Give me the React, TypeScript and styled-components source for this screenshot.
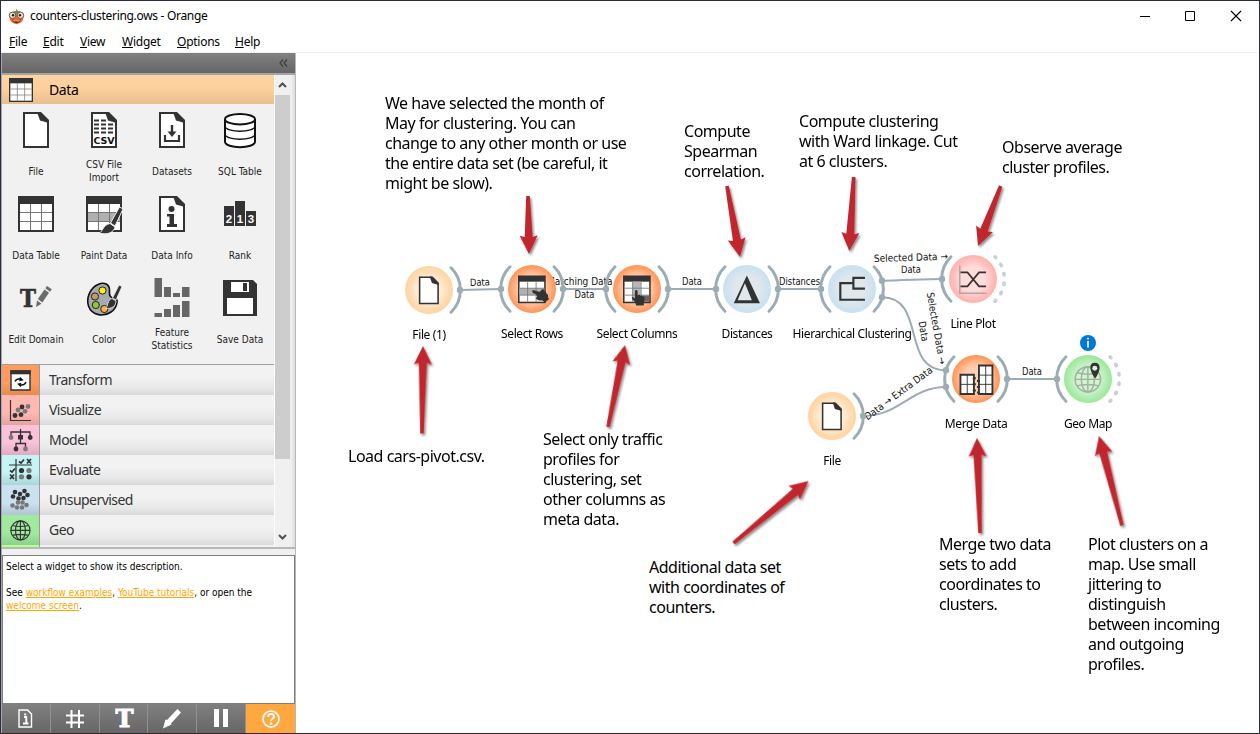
import React from "react";
import styled, { createGlobalStyle } from "styled-components";

const UI = `"Noto Sans", "Open Sans", sans-serif`;
const SMALL = `"DejaVu Sans Condensed", "DejaVu Sans", sans-serif`;
const INK = "#333333";
const LINK = "#9cacb4";

const GlobalStyle = createGlobalStyle`
  * { box-sizing: border-box; }
  body { margin: 0; background: #fff; font-family: ${UI}; color: #000; }
  svg { display: block; flex: none; }
`;

const Window = styled.div`
  width: 1260px;
  height: 734px;
  display: flex;
  flex-direction: column;
  border: 1px solid #2b2e42;
  border-bottom-color: #32242c;
  background: #fff;
  overflow: hidden;
`;

const TitleBar = styled.header`
  height: 30px;
  flex: none;
  display: flex;
  align-items: center;
  padding-left: 7px;
`;

const Title = styled.span`
  margin-left: 5px;
  font-size: 12px;
  line-height: 16px;
  letter-spacing: -0.31px;
  flex: 1;
`;

const Controls = styled.div`
  display: flex;
  gap: 30px;
  padding-right: 17px;
`;

const MenuBar = styled.nav`
  height: 22px;
  flex: none;
  display: flex;
  align-items: center;
  gap: 16px;
  padding-left: 8px;
  border-bottom: 1px solid #f0f0f0;
  font-size: 12px;
`;

const MenuItem = styled.span<{ $w: number }>`
  width: ${(p) => p.$w}px;
  letter-spacing: -0.25px;
  white-space: nowrap;
  &::first-letter { text-decoration: underline; }
`;

const Body = styled.div`
  flex: 1;
  display: flex;
  min-height: 0;
`;

const Sidebar = styled.aside`
  width: 295px;
  flex: none;
  display: flex;
  flex-direction: column;
  border-left: 1px solid #a6a8a8;
  border-right: 1px solid #b4b8b8;
  background: #f0f0f0;
`;

const DockHeader = styled.div`
  height: 20px;
  flex: none;
  display: flex;
  align-items: center;
  justify-content: flex-end;
  padding-right: 7px;
  background: linear-gradient(#808080, #666);
`;

const ToolArea = styled.div`
  height: 476px;
  flex: none;
  display: flex;
  border-top: 2px solid #a4a4a4;
  border-bottom: 2px solid #b4b8b8;
`;

const ToolList = styled.div`
  width: 272px;
  display: flex;
  flex-direction: column;
  overflow: hidden;
  background: #f1f1f1;
`;

const DataTab = styled.div`
  height: 29px;
  flex: none;
  display: flex;
  align-items: center;
  padding-left: 7px;
  gap: 16px;
  font-size: 14px;
  letter-spacing: -0.4px;
  background: linear-gradient(#ffd39f 0%, #fccf9b 50%, #e8bf8f 100%);
`;

const WidgetGrid = styled.div`
  height: 261px;
  flex: none;
  display: grid;
  grid-template-columns: repeat(4, 68px);
  grid-auto-rows: 84px;
  border-bottom: 1px solid #a0a0a0;
`;

const WidgetCell = styled.div`
  display: flex;
  flex-direction: column;
  align-items: center;
  padding-top: 8px;
`;

const WidgetLabel = styled.div`
  height: 26px;
  margin-top: 10px;
  display: flex;
  align-items: center;
  text-align: center;
  white-space: pre;
  font: 10px/13px ${SMALL};
  color: #222;
`;

const CategoryRow = styled.div`
  height: 30px;
  flex: none;
  display: flex;
`;

const CategoryIcon = styled.div<{ $top: string; $bottom: string }>`
  width: 38px;
  border-right: 1px solid #9a9a9a;
  display: flex;
  align-items: center;
  justify-content: center;
  background: linear-gradient(${(p) => p.$top} 60%, ${(p) => p.$bottom});
`;

const CategoryName = styled.div`
  flex: 1;
  padding-left: 9px;
  font-size: 14px;
  line-height: 30px;
  letter-spacing: -0.55px;
  color: ${INK};
  background: linear-gradient(#f2f2f2 40%, #e9e9e9 75%, #d9d9d9);
`;

const ScrollBar = styled.div`
  width: 17px;
  display: flex;
  flex-direction: column;
  align-items: center;
  justify-content: space-between;
  padding: 7px 1px 7px 0;
  border-left: 1px solid #fff;
  background: #f0f0f0;
`;

const Thumb = styled.div`
  width: 15px;
  height: 364px;
  margin: 7px 0 auto;
  background: #cdcdcd;
`;

const DockEdge = styled.div`
  flex: 1;
  background: linear-gradient(90deg, #f0f0f0, #dcdcdc);
`;

const Splitter = styled.div`
  height: 6px;
  flex: none;
  background: #f0f0f0;
`;

const Description = styled.div`
  flex: 1;
  border: 1px solid #7c7f80;
  background: #fff;
  padding: 4px 3px;
  font: 10px/13px ${SMALL};
  color: #000;
`;

const Para = styled.p`
  margin: 0 0 13px;
`;

const HelpLink = styled.a`
  color: #ffa500;
  text-decoration: underline;
`;

const BottomBar = styled.div`
  height: 29px;
  flex: none;
  display: grid;
  grid-template-columns: repeat(6, 1fr);
`;

const BarButton = styled.div<{ $active?: boolean }>`
  display: flex;
  align-items: center;
  justify-content: center;
  border-right: ${(p) => (p.$active ? "none" : "1px solid #919191")};
  background: ${(p) => (p.$active ? "#ffa840" : "linear-gradient(#808080, #666)")};
`;

const Canvas = styled.main`
  position: relative;
  flex: 1;
  background: #fff;
`;

const Note = styled.div<{ $x: number; $y: number }>`
  position: absolute;
  left: ${(p) => p.$x - 296}px;
  top: ${(p) => p.$y - 53}px;
  font-size: 16px;
  line-height: 20px;
  letter-spacing: -0.48px;
  white-space: pre;
`;

const NodeName = styled.div<{ $x: number; $y: number }>`
  position: absolute;
  left: ${(p) => p.$x - 396}px;
  top: ${(p) => p.$y - 61}px;
  width: 200px;
  text-align: center;
  font-size: 12px;
  line-height: 16px;
  letter-spacing: -0.38px;
`;

/* ---------- icons, all drawn on a 36 unit grid ---------- */

const Page = () => (
  <>
    <path d="M6 1H21L30 10V35H6Z" fill="#fff" stroke={INK} strokeWidth="2" />
    <path d="M19 0H23L31 8V11L22 8.5Z" fill={INK} />
  </>
);

const Table = ({ shade }: { shade?: "row" | "col" }) => (
  <>
    <rect x="0" y="0" width="36" height="36" fill={INK} />
    <path d="M2 8H34V34H2Z" fill="#fff" />
    {shade === "row" && <rect x="2" y="16.5" width="32" height="9" fill="#b0b0b0" />}
    {shade === "col" && <rect x="12.5" y="8" width="10.5" height="26" fill="#b8b8b8" />}
    <path d="M12.5 8V34M23.5 8V34M2 16.5H34M2 25.5H34" stroke="#777" strokeWidth="1.1" fill="none" />
  </>
);

const Brush = () => (
  <g stroke="#f1f1f1" strokeWidth="1" fill={INK}>
    <path d="M33.5 11L37 13L29 30L24.5 27Z" />
    <path d="M24 27.5L29 31C28 36 22 39.5 13 37C17 36 16.5 29 24 27.5Z" />
  </g>
);

/* pointing to the left, fist at the right */
const Hand = () => (
  <path
    d="M.8 3.200C0 1.500 1 .3 2.800 .5L10 3L13.500 -.5C15-1 16 0 16.500 1.500L18.300 2.500L19 5L21 6.500V10L22.500 12L17 16.500L13.500 14C10 14.500 6.500 13.500 5.500 11.500C5 10.500 6 9.800 7 9.500L5.500 6L1.800 4.500Z"
    fill={INK}
  />
);

const Globe = ({ color, width = 2 }: { color: string; width?: number }) => (
  <g fill="none" stroke={color} strokeWidth={width}>
    <circle cx="18" cy="18" r="16.5" />
    <ellipse cx="18" cy="18" rx="8.5" ry="16.5" />
    <path d="M18 1.5V34.5M1.5 18H34.5M4 9.5Q18 13 32 9.5M4 26.5Q18 23 32 26.5" />
  </g>
);

const glyphs: Record<string, React.ReactNode> = {
  file: <Page />,
  csv: (
    <>
      <Page />
      <path d="M8 8.5h5m2 0h5M8 12.5h5m2 0h5m2 0h5M8 16.5h5m2 0h5m2 0h5M8 20.5h5m2 0h5m2 0h5" stroke={INK} strokeWidth="1.8" />
      <text x="18" y="32" textAnchor="middle" fontFamily="DejaVu Sans" fontWeight="700" fontSize="9.5" textLength="21" fill="#111">CSV</text>
    </>
  ),
  datasets: (
    <>
      <Page />
      <path d="M18 13V22" stroke={INK} strokeWidth="2.4" />
      <path d="M13.5 19.5H22.5L18 25Z" fill={INK} />
      <path d="M11 23V29H25V23" fill="none" stroke={INK} strokeWidth="2.2" />
    </>
  ),
  sql: (
    <g fill="#fff" stroke="#111" strokeWidth="2">
      <path d="M3 7V29.5C3 37 33 37 33 29.5V7" />
      <ellipse cx="18" cy="7.2" rx="15" ry="5.2" />
      <path d="M3 14C3 21 33 21 33 14M3 22C3 29 33 29 33 22" fill="none" strokeWidth="1.3" />
    </g>
  ),
  table: <Table />,
  paint: (
    <>
      <Table shade="row" />
      <Brush />
    </>
  ),
  info: (
    <>
      <Page />
      <circle cx="17.5" cy="13" r="3" fill={INK} />
      <path d="M13 18H20V28H23V31H13V28H15.5V20.5H13Z" fill={INK} />
    </>
  ),
  rank: (
    <>
      <path d="M2 10H12V30H2ZM13 5H23V30H13ZM24 15H34V30H24Z" fill={INK} />
      <g fill="#fff" fontFamily="Liberation Sans" fontWeight="700" fontSize="11.5" textAnchor="middle">
        <text x="7" y="27">2</text>
        <text x="18" y="27">1</text>
        <text x="29" y="27">3</text>
      </g>
    </>
  ),
  domain: (
    <>
      <text x="10" y="27" textAnchor="middle" fontFamily="DejaVu Serif" fontWeight="700" fontSize="24" textLength="16" lengthAdjust="spacingAndGlyphs" fill={INK} stroke={INK} strokeWidth=".6">T</text>
      <path d="M18 27L19 20.5L23.5 23.8Z M19.8 19L26.5 9.5L31 12.8L24.3 22.4Z M27.3 8.3L29 6L33.8 9.2L32 11.7Z" fill="#6b6b6b" />
    </>
  ),
  color: (
    <>
      <path d="M12 4.5C18 1.5 24 4 23.5 11C23 17 25 18 29 18C33 19 31 28 25 32C18 37 6 36 2.5 26C0 18 4 8 12 4.5Z" fill="#a8aaad" stroke="#111" strokeWidth="1.6" />
      <g stroke="#222" strokeWidth="1">
        <circle cx="16.5" cy="10.5" r="3.6" fill="#ffef00" />
        <circle cx="9" cy="16.5" r="3.6" fill="#c49a6c" />
        <circle cx="9.8" cy="25" r="3.6" fill="#8cc63f" />
        <circle cx="18.3" cy="29" r="3.6" fill="#fbb03b" />
      </g>
      <g stroke="#f1f1f1" strokeWidth=".8" fill={INK}>
        <path d="M33 5L36 6.500L30 20L26.500 18Z" />
        <path d="M26 18.500L30 21C30 26 26 29 19.500 28.500C22.500 26 21 20 26 18.500Z" />
      </g>
    </>
  ),
  stats: (
    <path d="M.5-2H8V17H.5ZM10 7H17V17H10ZM19 13H26V17H19ZM28 7H35.5V17H28ZM.5 33H8V37H.5ZM10 29H17V37H10ZM19 25H26V37H19ZM28 21H35.5V37H28Z" fill="#666" />
  ),
  save: (
    <>
      <path d="M1 0H31L35 4V36H1Z" fill={INK} />
      <path d="M9 2H27V12H9Z M5 18H31V34H5Z" fill="#fff" />
      <path d="M21 3H25V11H21Z" fill={INK} />
    </>
  ),
  rows: (
    <>
      <Table shade="row" />
      <g transform="translate(18 18.500)"><Hand /></g>
    </>
  ),
  cols: (
    <>
      <Table shade="col" />
      <rect x="24" y="26" width="10" height="8" fill="#666" />
      <path d="M15.5 21C15.5 18 19 18 19 21V26C21 24.5 22 25 22.5 26.5C24 25.5 25 26 25.5 27.5C27.5 27 28.5 28.5 28 31L27 36V39H17L16 35L11.5 30C11 27.5 13 27.5 15.5 30Z" fill={INK} />
    </>
  ),
  delta: <path fillRule="evenodd" d="M18 0L35 36H1ZM15.5 10L6 32H24.5Z" fill={INK} />,
  tree: <path d="M35 3H20V17H35M20 10H3V31.5H35" fill="none" stroke={INK} strokeWidth="2.8" />,
  lines: (
    <>
      <path d="M1 0V36H36" fill="none" stroke="#b5a5a5" strokeWidth="2" />
      <path d="M2 9H11L26 27H35M2 27H11L26 9H35" fill="none" stroke={INK} strokeWidth="2.2" />
    </>
  ),
  merge: (
    <>
      <path d="M-2 12H15.500V37H-2ZM22 0H39.500V37H22Z" fill="#fff" stroke={INK} strokeWidth="2.4" />
      <path d="M6.800 12V37M-2 24.500H15.500M30.800 0V37M22 12.500H39.500M22 24.500H39.500" fill="none" stroke={INK} strokeWidth="1.200" />
      <path d="M14 16.500H18M14 24.500H18M14 32.500H18M19.500 20H23M19.500 28H23M19.500 35H23" stroke={INK} strokeWidth="2.600" />
    </>
  ),
  map: (
    <>
      <Globe color="#9fb39f" width={1.9} />
      <path d="M27-3.5C36-3.5 34.5 7 27.5 17C20 7 18.5-3.5 27-3.5Z" fill={INK} />
      <circle cx="27" cy="3.5" r="3.2" fill="#d9f3d9" />
    </>
  ),
};

const Glyph = ({ name, size = 36 }: { name: string; size?: number }) => (
  <svg width={size} height={size} viewBox="0 0 36 36" overflow="visible">{glyphs[name]}</svg>
);

const widgets: [string, string][] = [
  ["file", "File"],
  ["csv", "CSV File\nImport"],
  ["datasets", "Datasets"],
  ["sql", "SQL Table"],
  ["table", "Data Table"],
  ["paint", "Paint Data"],
  ["info", "Data Info"],
  ["rank", "Rank"],
  ["domain", "Edit Domain"],
  ["color", "Color"],
  ["stats", "Feature\nStatistics"],
  ["save", "Save Data"],
];

const Dots = ({ at, fill, r = 2.4 }: { at: number[][]; fill: string; r?: number }) => (
  <>{at.map(([x, y]) => <circle key={`${x}-${y}`} cx={x} cy={y} r={r} fill={fill} />)}</>
);

const categories: { name: string; top: string; bottom: string; icon?: React.ReactNode }[] = [
  {
    name: "Transform", top: "#ff9b5c", bottom: "#e68a50",
    icon: (
      <>
        <path d="M3 3H22V22H3Z" fill="#fff" stroke={INK} strokeWidth="1.4" />
        <path d="M2.3 2.3H22.7V6.3H2.3Z" fill={INK} />
        <path d="M7 13.500Q8.500 10 13 11.200M18 14Q16.500 17.800 12 16.800" fill="none" stroke="#111" strokeWidth="1.500" />
        <path d="M11.800 8.800L15.800 12.200L11.300 13.200ZM13.300 14.800L9.200 15.800L12.800 19.200Z" fill="#111" />
      </>
    ),
  },
  {
    name: "Visualize", top: "#ffb7b1", bottom: "#e6a29c",
    icon: (
      <>
        <path d="M2.500 2V22.500H23" fill="none" stroke={INK} strokeWidth="1.2" />
        <Dots at={[[14, 9], [7, 17.500], [13, 16.700]]} fill={INK} />
        <Dots at={[[20, 8.500], [10, 12], [17, 13.300]]} fill="#7a7a7a" />
      </>
    ),
  },
  {
    name: "Model", top: "#fac1d9", bottom: "#e0abc2",
    icon: (
      <>
        <path d="M3 8V4H22V8M12.500 1V9M8 19V15.500H17.500V19M12.500 11V15.500" fill="none" stroke={INK} strokeWidth="1.3" />
        <path d="M10 7H15V11.500H10Z" fill={INK} />
        <Dots at={[[22.200, 9.500], [8, 21]]} fill={INK} />
        <Dots at={[[3, 9.500], [17.500, 21]]} fill="#7a7a7a" />
      </>
    ),
  },
  {
    name: "Evaluate", top: "#c3f3f3", bottom: "#a9d6d6",
    icon: (
      <>
        <path d="M8 1V23M1 7H24" stroke={INK} strokeWidth="1.2" />
        <path d="M11 3.500L13 5L16 1.500M19 1L23 5.500M23 1L19 5.500M2 12.500L4 14L7 10.500M2 16.500L6 21M6 16.500L2 21" fill="none" stroke={INK} strokeWidth="1.7" />
        <Dots at={[[13.500, 12.500], [21, 18.800]]} fill={INK} r={2.6} />
        <Dots at={[[21, 12.500], [13.500, 18.800]]} fill="#7a7a7a" r={2.6} />
      </>
    ),
  },
  {
    name: "Unsupervised", top: "#cae1ef", bottom: "#b0c5d2",
    icon: (
      <>
        <Dots at={[[7, 4], [12, 6], [16.500, 3], [5, 8.500], [10.500, 10.500], [15.500, 10], [19.500, 7]]} fill={INK} r={2.3} />
        <Dots at={[[10, 14.500], [14.500, 14.500], [4.500, 17.500], [9, 19.500], [14, 19.500], [18.500, 17]]} fill="#777" r={2.3} />
      </>
    ),
  },
  {
    name: "Geo", top: "#9fea9f", bottom: "#8bd08b",
    icon: <g transform="translate(2 2) scale(.58)"><Globe color={INK} /></g>,
  },
];

const nodeList: { x: number; y: number; glyph: string; label: string; tone: string; left?: boolean; right?: "line" | "dots" }[] = [
  { x: 429, y: 290, glyph: "file", label: "File (1)", tone: "sand", right: "line" },
  { x: 532, y: 289, glyph: "rows", label: "Select Rows", tone: "orange", left: true, right: "line" },
  { x: 637, y: 289, glyph: "cols", label: "Select Columns", tone: "orange", left: true, right: "line" },
  { x: 747, y: 289, glyph: "delta", label: "Distances", tone: "blue", left: true, right: "line" },
  { x: 852, y: 289, glyph: "tree", label: "Hierarchical Clustering", tone: "blue", left: true, right: "line" },
  { x: 973, y: 279, glyph: "lines", label: "Line Plot", tone: "pink", left: true, right: "dots" },
  { x: 976, y: 379, glyph: "merge", label: "Merge Data", tone: "orange", left: true, right: "line" },
  { x: 1088, y: 379, glyph: "map", label: "Geo Map", tone: "green", left: true, right: "dots" },
  { x: 832, y: 416, glyph: "file", label: "File", tone: "sand", right: "line" },
];

const tones: Record<string, [string, string]> = {
  sand: ["#ffebd3", "#ffd39f"],
  orange: ["#ffd0b0", "#ff9457"],
  blue: ["#e0e8ee", "#c8e0ef"],
  pink: ["#ffdcda", "#ffb0ac"],
  green: ["#d2f2d0", "#98e898"],
};

const arrows = [
  [528, 196, 529, 254],
  [727, 186, 740, 257],
  [853.7, 177, 849.3, 251],
  [1000.7, 186, 978, 246],
  [422, 433.5, 423, 346],
  [608, 427, 625, 345],
  [733.5, 543, 808.5, 481],
  [980, 533, 977, 438],
  [1122, 525.5, 1099, 436],
];

const Arrow = ({ from }: { from: number[] }) => {
  const [x1, y1, x2, y2] = from;
  const l = Math.hypot(x2 - x1, y2 - y1);
  const angle = (Math.atan2(y2 - y1, x2 - x1) * 180) / Math.PI;
  return (
    <g transform={`translate(${x1} ${y1}) rotate(${angle})`}>
      <path d={`M0-1.8L${l - 17}-4L${l - 18.5}-9L${l} 0L${l - 18.5} 9L${l - 17} 4L0 1.8Z`} fill="#c1272d" />
    </g>
  );
};

const linkTexts: { x: number; y: number; a: number; w: number; t: string }[] = [
  { x: 470, y: 286, a: -1.5, w: 20, t: "Data" },
  { x: 547, y: 285, a: 0, w: 76, t: "Matching Data →" },
  { x: 574.500, y: 298, a: 0, w: 20, t: "Data" },
  { x: 682, y: 285, a: 0, w: 20, t: "Data" },
  { x: 779, y: 285, a: 0, w: 41, t: "Distances" },
  { x: 874, y: 262, a: -1.700, w: 74, t: "Selected Data →" },
  { x: 901, y: 273, a: -1, w: 20, t: "Data" },
  { x: 926.700, y: 293, a: 80, w: 73, t: "Selected Data →" },
  { x: 918.500, y: 322, a: 80, w: 20, t: "Data" },
  { x: 867.500, y: 420.500, a: -36.600, w: 82, t: "Data → Extra Data" },
  { x: 1022, y: 375, a: 0, w: 20, t: "Data" },
];

const links = [
  "M460 290L501 289",
  "M563 289H606",
  "M668 289H716",
  "M778 289H821",
  "M882 280.700C900 280.700 924 279 942 279",
  "M882 297.300C927 297.300 900 370.300 946 370.300",
  "M863 416C900 416 910 387 946 387",
  "M1007 379H1057",
];

const anchors = [
  [460, 290], [501, 289], [563, 289], [606, 289], [668, 289], [716, 289], [778, 289], [821, 289],
  [882, 280.7], [882, 297.3], [942, 279], [946, 370.3], [946, 387], [863, 416], [1007, 379], [1057, 379],
];

const notes: [number, number, string][] = [
  [385, 93, "We have selected the month of\nMay for clustering. You can\nchange to any other month or use\nthe entire data set (be careful, it\nmight be slow)."],
  [684, 121, "Compute\nSpearman\ncorrelation."],
  [799, 111, "Compute clustering\nwith Ward linkage. Cut\nat 6 clusters."],
  [1002, 137, "Observe average\ncluster profiles."],
  [348, 446, "Load cars-pivot.csv."],
  [543, 429, "Select only traffic\nprofiles for\nclustering, set\nother columns as\nmeta data."],
  [649, 557, "Additional data set\nwith coordinates of\ncounters."],
  [939, 534, "Merge two data\nsets to add\ncoordinates to\nclusters."],
  [1088, 534, "Plot clusters on a\nmap. Use small\njittering to\ndistinguish\nbetween incoming\nand outgoing\nprofiles."],
];

const Workflow = () => (
  <svg width="963" height="680" viewBox="296 53 963 680">
    <defs>
      {Object.entries(tones).map(([key, [inner, outer]]) => (
        <radialGradient id={key} key={key}>
          <stop offset="0" stopColor={inner} />
          <stop offset=".5" stopColor={inner} />
          <stop offset="1" stopColor={outer} />
        </radialGradient>
      ))}
      <filter id="shadow" x="-5%" y="-5%" width="110%" height="110%">
        <feDropShadow dx="1.500" dy="2" stdDeviation="1.300" floodColor="#000" floodOpacity=".45" />
      </filter>
    </defs>
    <g fill="none" stroke={LINK} strokeWidth="2">
      {links.map((d) => <path key={d} d={d} />)}
    </g>
    <g fontFamily="DejaVu Sans Condensed, DejaVu Sans, sans-serif" fontSize="10" fill="#111">
      {linkTexts.map((l, i) => (
        <text key={i} transform={`translate(${l.x} ${l.y}) rotate(${l.a})`} textLength={l.w} lengthAdjust="spacingAndGlyphs">{l.t}</text>
      ))}
    </g>
    {nodeList.map((n) => (
      <g key={n.label} transform={`translate(${n.x} ${n.y})`}>
        <g fill="none" stroke={LINK} strokeWidth="3" strokeLinecap="round">
          {n.left && <path d="M-22-22.200A31 31 0 0 0-22 22.200" />}
          {n.right === "line" && <path d="M22-22.200A31 31 0 0 1 22 22.200" />}
          {n.right === "dots" && (
            <path d="M22-22.200A31 31 0 0 1 22 22.200" stroke="#c6d0d6" strokeWidth="3.600" strokeDasharray="1.300 8.300" />
          )}
        </g>
        <circle r="24" fill={`url(#${n.tone})`} />
        <g transform="translate(-14 -13.500) scale(.77)">{glyphs[n.glyph]}</g>
      </g>
    ))}
    {anchors.map(([x, y]) => <circle key={`${x},${y}`} cx={x} cy={y} r="3.200" fill={LINK} />)}
    <circle cx="1088" cy="343" r="8" fill="#0078d7" />
    <path d="M1088 341V347.500M1088 337.700V339.500" stroke="#fff" strokeWidth="1.600" />
    <g filter="url(#shadow)">{arrows.map((a, i) => <Arrow key={i} from={a} />)}</g>
  </svg>
);

const Logo = () => (
  <svg width="17" height="17" viewBox="0 0 17 17">
    <ellipse cx="8.500" cy="9.500" rx="7" ry="6.500" fill="#ee6a24" />
    <path d="M5 3L8 3.500L8.500 .5L10 3.500L13 3L10 5H7Z" fill="#3c9a48" />
    <circle cx="4.500" cy="7.300" r="3.200" fill="#e8e4dc" stroke="#74543f" />
    <circle cx="12.500" cy="7.300" r="3.200" fill="#e8e4dc" stroke="#74543f" />
    <circle cx="5" cy="7.300" r="1.200" fill="#222" />
    <circle cx="12" cy="7.300" r="1.200" fill="#222" />
    <path d="M4 11.500Q8.500 13 13 11.500Q11 15.500 8.500 15.300Q6 15.500 4 11.500Z" fill="#8d1c16" />
    <path d="M5 12Q8.500 13.200 12 12L11 13.300H6Z" fill="#fff" />
  </svg>
);

const Chevron = ({ down }: { down?: boolean }) => (
  <svg width="9" height="6" viewBox="0 0 9 6">
    <path d={down ? "M1 1L4.500 4.500L8 1" : "M1 5L4.500 1.500L8 5"} fill="none" stroke="#505050" strokeWidth="2" />
  </svg>
);

export default function App() {
  return (
    <>
      <GlobalStyle />
      <Window>
        <TitleBar>
          <Logo />
          <Title>counters-clustering.ows - Orange</Title>
          <Controls>
            <svg width="18" height="12" viewBox="0 0 18 12"><path d="M4 6.500H14" stroke="#000" /></svg>
            <svg width="14" height="12" viewBox="0 0 14 12"><path d="M1.500 1.500H10.500V10.500H1.500Z" fill="none" stroke="#000" /></svg>
            <svg width="14" height="12" viewBox="0 0 14 12"><path d="M3 1L13 11M13 1L3 11" stroke="#000" strokeWidth="1.100" /></svg>
          </Controls>
        </TitleBar>
        <MenuBar>
          <MenuItem $w={18}>File</MenuItem>
          <MenuItem $w={21}>Edit</MenuItem>
          <MenuItem $w={26}>View</MenuItem>
          <MenuItem $w={39}>Widget</MenuItem>
          <MenuItem $w={42}>Options</MenuItem>
          <MenuItem $w={25}>Help</MenuItem>
        </MenuBar>
        <Body>
          <Sidebar>
            <DockHeader>
              <svg width="9" height="8" viewBox="0 0 9 8"><path d="M4 .5L1 4L4 7.500M8 .5L5 4L8 7.500" fill="none" stroke="#3c3c3c" strokeWidth="1.200" /></svg>
            </DockHeader>
            <ToolArea>
              <ToolList>
                <DataTab>
                  <Glyph name="table" size={24} />
                  Data
                </DataTab>
                <WidgetGrid>
                  {widgets.map(([icon, label]) => (
                    <WidgetCell key={icon}>
                      <Glyph name={icon} />
                      <WidgetLabel>{label}</WidgetLabel>
                    </WidgetCell>
                  ))}
                </WidgetGrid>
                {categories.map((c) => (
                  <CategoryRow key={c.name}>
                    <CategoryIcon $top={c.top} $bottom={c.bottom}>
                      <svg width="25" height="25" viewBox="0 0 25 25">{c.icon}</svg>
                    </CategoryIcon>
                    <CategoryName>{c.name}</CategoryName>
                  </CategoryRow>
                ))}
                <CategoryRow>
                  <CategoryIcon $top="#b8ff8c" $bottom="#b8ff8c" />
                  <CategoryName />
                </CategoryRow>
              </ToolList>
              <ScrollBar>
                <Chevron />
                <Thumb />
                <Chevron down />
              </ScrollBar>
              <DockEdge />
            </ToolArea>
            <Splitter />
            <Description>
              <Para>Select a widget to show its description.</Para>
              <Para>
                See <HelpLink>workflow examples</HelpLink>, <HelpLink>YouTube tutorials</HelpLink>, or open the<br />
                <HelpLink>welcome screen</HelpLink>.
              </Para>
            </Description>
            <BottomBar>
              <BarButton>
                <svg width="15" height="19" viewBox="0 0 15 19">
                  <path d="M1 1H9.500L13.500 5V18H1Z" fill="none" stroke="#fff" strokeWidth="1.400" />
                  <path d="M6 8H8.300V14.500M5 14.500H10.500M7.200 4.500V6.500" fill="none" stroke="#fff" strokeWidth="1.900" />
                </svg>
              </BarButton>
              <BarButton>
                <svg width="20" height="20" viewBox="0 0 20 20"><path d="M6.500 1V19M14 1V19M1 6.500H19M1 13.500H19" stroke="#fff" strokeWidth="2" /></svg>
              </BarButton>
              <BarButton>
                <svg width="24" height="29" viewBox="0 0 24 29" overflow="visible">
                  <text x="3.500" y="23" fontFamily="DejaVu Serif" fontWeight="700" fontSize="24" textLength="18" lengthAdjust="spacingAndGlyphs" fill="#fff" stroke="#fff" strokeWidth="1">T</text>
                </svg>
              </BarButton>
              <BarButton>
                <svg width="20" height="20" viewBox="0 0 20 20"><path d="M15.500 0L19 3.500L9 14.500L9.500 15.500L1 19.500L3.500 10.500L5 11Z" fill="#fff" /></svg>
              </BarButton>
              <BarButton>
                <svg width="16" height="19" viewBox="0 0 16 19"><path d="M1 0H6V18H1ZM10 0H15V18H10Z" fill="#fff" /></svg>
              </BarButton>
              <BarButton $active>
                <svg width="20" height="20" viewBox="0 0 20 20">
                  <circle cx="10" cy="10" r="8" fill="none" stroke="#fff" strokeWidth="1.700" />
                  <path d="M7 8C7 4 13 4 13 7.500C13 9.500 10 9.500 10 12" fill="none" stroke="#fff" strokeWidth="1.900" />
                  <circle cx="10" cy="14.500" r="1.200" fill="#fff" />
                </svg>
              </BarButton>
            </BottomBar>
          </Sidebar>
          <Canvas>
            <Workflow />
            {nodeList.map((n) => <NodeName key={n.label} $x={n.x} $y={n.y + 44.5}>{n.label}</NodeName>)}
            {notes.map(([x, y, text]) => <Note key={text} $x={x} $y={y}>{text}</Note>)}
          </Canvas>
        </Body>
      </Window>
    </>
  );
}
